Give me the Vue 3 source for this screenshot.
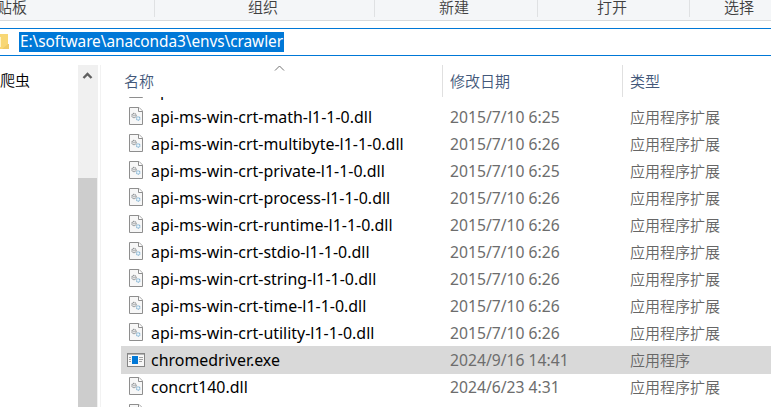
<script setup>
const rows = [
  ['api-ms-win-crt-locale-l1-1-0.dll', '2015/7/10 6:25'],
  ['api-ms-win-crt-math-l1-1-0.dll', '2015/7/10 6:25'],
  ['api-ms-win-crt-multibyte-l1-1-0.dll', '2015/7/10 6:26'],
  ['api-ms-win-crt-private-l1-1-0.dll', '2015/7/10 6:25'],
  ['api-ms-win-crt-process-l1-1-0.dll', '2015/7/10 6:26'],
  ['api-ms-win-crt-runtime-l1-1-0.dll', '2015/7/10 6:26'],
  ['api-ms-win-crt-stdio-l1-1-0.dll', '2015/7/10 6:26'],
  ['api-ms-win-crt-string-l1-1-0.dll', '2015/7/10 6:26'],
  ['api-ms-win-crt-time-l1-1-0.dll', '2015/7/10 6:26'],
  ['api-ms-win-crt-utility-l1-1-0.dll', '2015/7/10 6:26'],
  ['chromedriver.exe', '2024/9/16 14:41', true],
  ['concrt140.dll', '2024/6/23 4:31'],
  ['', ''],
].map(([name, date, app], i) => ({ name, date, app, type: name && i ? (app ? '应用程序' : '应用程序扩展') : '' }))
</script>

<template>
  <div class="window">
    <div class="ribbon">
      <div class="group g1"><span>贴板</span></div>
      <div class="group g2"><span>组织</span></div>
      <div class="group g3"><span>新建</span></div>
      <div class="group g4"><span>打开</span></div>
      <div class="group g5"><span>选择</span></div>
    </div>
    <div class="address">
      <svg class="folder" width="9" height="16" viewBox="0 0 9 16">
        <path d="M0 0H8V10H9V15H0Z" fill="#f8d775" />
        <path d="M0 3H1V13H0Z" fill="#fff3c4" />
        <path d="M8 10H9V15H2Z" fill="#f0cb68" />
      </svg>
      <span class="path">E:\software\anaconda3\envs\crawler</span>
    </div>
    <div class="body">
      <div class="tree"><span>爬虫</span></div>
      <div class="scroll">
        <svg width="20" height="20" viewBox="0 0 20 20">
          <path d="M5.5 13L9.5 9L13.5 13" fill="none" stroke="#606060" stroke-width="2.4" />
        </svg>
        <div class="thumb"></div>
      </div>
      <div class="files">
        <div class="head">
          <div class="h-name">
            名称
            <svg class="sort" width="11" height="7" viewBox="0 0 11 7">
              <path d="M1 5.5L5.5 1L10 5.5" fill="none" stroke="#747474" stroke-width="1" />
            </svg>
          </div>
          <div class="h-date">修改日期</div>
          <div class="h-type">类型</div>
        </div>
        <div class="clip">
          <div class="list">
            <div v-for="(r, i) in rows" :key="i" class="row" :class="{ selected: r.app }">
              <svg v-if="r.app" class="icon" width="18" height="16" viewBox="0 1 18 16">
                <rect x="0.5" y="2.5" width="17" height="13" fill="#f7f7f7" stroke="#858585" />
                <path d="M1 3.5H17" stroke="#b5b5b5" />
                <rect x="5" y="5" width="6" height="8" fill="#0078d7" />
                <path d="M2 6.5H4M2 8.5H4M2 10.5H4M12 6.5H16M12 8.5H16M12 10.5H15" stroke="#a0a0a0" />
              </svg>
              <svg v-else class="icon" width="18" height="18" viewBox="0 0 18 18">
                <path d="M2.5 .5H12L15.5 4V17.5H2.5Z" fill="#f7f7f7" stroke="#8e8e8e" />
                <path d="M11.5 .5V4.5H15.5" fill="#fff" stroke="#8e8e8e" />
                <circle cx="7" cy="8.5" r="2.1" fill="#e8e8e8" stroke="#8e9295" stroke-width="1.2" stroke-dasharray="1.1 .5" />
                <circle cx="7" cy="8.5" r=".6" fill="#858b90" />
                <circle cx="11.2" cy="11.5" r="1.7" fill="#edf7fd" stroke="#86b4d2" stroke-width="1.2" stroke-dasharray="1.2 .4" />
              </svg>
              <span class="name">{{ r.name }}</span>
              <span class="date">{{ r.date }}</span>
              <span class="type">{{ r.type }}</span>
            </div>
          </div>
        </div>
      </div>
    </div>
  </div>
</template>

<style>
body { margin: 0; overflow: hidden; }
</style>

<style scoped>
.window { width: 771px; height: 407px; overflow: hidden; background: #fff; display: flex; flex-direction: column; font: 15px/20px "Noto Sans", "Noto Sans CJK SC", sans-serif; color: #000; white-space: nowrap; }
.window * { box-sizing: border-box; }
.ribbon { height: 21px; flex: none; background: #f4f6f8; border-bottom: 1px solid #d9dbdd; display: flex; color: #404040; font-family: "Noto Sans CJK SC", sans-serif; font-weight: 350; }
.group { flex: none; height: 17px; border-right: 1px solid #dfe1e3; }
.group span { display: block; margin-top: -3px; }
.g1 { width: 155px; } .g1 span { margin-left: -3px; }
.g2 { width: 220px; padding-left: 93px; }
.g3 { width: 163px; padding-left: 64px; }
.g4 { width: 152px; padding-left: 59px; }
.g5 { width: 81px; padding-left: 34px; border: 0; }
.address { flex: none; margin-top: 7px; height: 28px; border: solid #0078d7; border-width: 1px 0; display: flex; align-items: center; }
.folder { flex: none; }
.path { margin-left: 10px; width: 265px; height: 20px; background: #0078d7; color: #fff; line-height: 20px; padding-left: 1px; font-size: 15.4px; letter-spacing: -0.06px; }
.body { flex: 1; min-height: 0; display: flex; }
.tree { width: 78px; padding-top: 14px; font-family: "Noto Sans CJK SC", sans-serif; font-weight: 350; }
.scroll { width: 20px; margin-top: 9px; background: #f0f0f0; display: flex; flex-direction: column; flex: none; }
.scroll svg { flex: none; }
.thumb { margin-top: 93px; width: 19px; flex: 1; background: #cdcdcd; }
.files { flex: 1; min-width: 0; margin: 9px 0 0 2px; border-left: 1px solid #f2f2f2; display: flex; flex-direction: column; }
.head { height: 32px; flex: none; display: flex; color: #43587a; font-family: "Noto Sans CJK SC", sans-serif; font-weight: 350; line-height: 32px; }
.h-name { position: relative; width: 342px; padding-left: 23px; border-right: 1px solid #e0e0e0; }
.sort { position: absolute; left: 173px; top: 0; }
.h-date { width: 180px; padding-left: 7px; border-right: 1px solid #e0e0e0; }
.h-type { padding-left: 7px; }
.clip { flex: 1; min-height: 0; overflow: hidden; }
.list { margin-top: -21px; }
.row { height: 27px; margin-left: 20px; display: flex; align-items: center; line-height: 27px; }
.row.selected { background: #d9d9d9; box-shadow: 0 1px #d9d9d9; }
.icon { flex: none; margin-left: 6px; }
.row:not(.selected) .icon { margin-bottom: 1px; }
.name { width: 299px; margin-left: 6px; padding-top: 2px; font-size: 15.95px; }
.date { width: 180px; padding-top: 2px; color: #6d6d6d; font-size: 15.7px; }
.type { padding-bottom: 1px; color: #666; font-family: "Noto Sans CJK SC", sans-serif; font-weight: 350; }
</style>
